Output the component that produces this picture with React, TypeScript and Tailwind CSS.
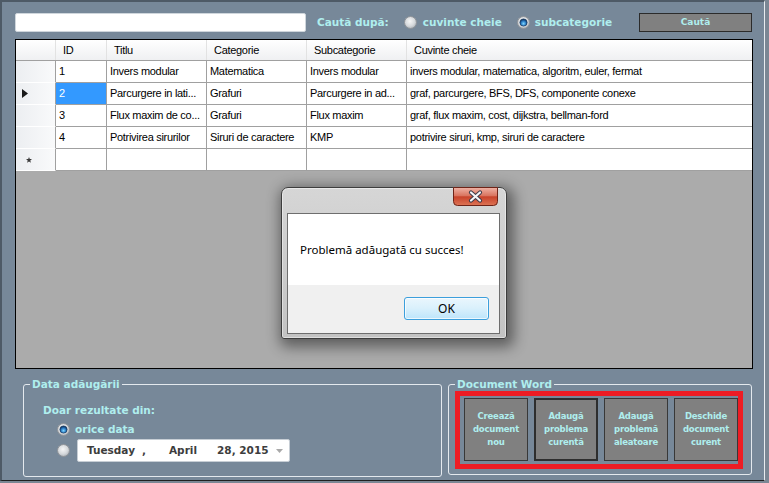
import React from "react";

const LBL = "font-['DejaVu_Sans',sans-serif] font-bold text-[#afeeee]";
const GRIDFONT = "font-['Liberation_Sans',Arial,sans-serif] text-[11px] tracking-[-0.3px] text-black";

function Radio({ checked, id }: { checked?: boolean; id: string }) {
  return (
    <svg width="13" height="13" viewBox="0 0 13 13" className="shrink-0 block">
      <defs>
        <radialGradient id={`g${id}`} cx="45%" cy="40%" r="65%">
          <stop offset="0" stopColor="#f6f6f6" />
          <stop offset="0.6" stopColor="#d6d9dc" />
          <stop offset="1" stopColor="#aab0b6" />
        </radialGradient>
        <radialGradient id={`b${id}`} cx="50%" cy="65%" r="60%">
          <stop offset="0" stopColor="#7fd6ff" />
          <stop offset="0.55" stopColor="#2a7cc4" />
          <stop offset="1" stopColor="#0c2f5c" />
        </radialGradient>
      </defs>
      <circle cx="6.5" cy="6.5" r="6" fill={`url(#g${id})`} stroke="#8f9398" />
      {checked && (
        <circle cx="6.5" cy="6.5" r="3.6" fill={`url(#b${id})`} stroke="#12365e" strokeWidth="0.7" />
      )}
    </svg>
  );
}

const colW = ["w-[51px]", "w-[100px]", "w-[100px]", "w-[100px]", "w-[345px]"];
const headers = ["ID", "Titlu", "Categorie", "Subcategorie", "Cuvinte cheie"];
const rows = [
  ["1", "Invers modular", "Matematica", "Invers modular", "invers modular, matematica, algoritm, euler, fermat"],
  ["2", "Parcurgere in lati...", "Grafuri", "Parcurgere in ad...", "graf, parcurgere, BFS, DFS, componente conexe"],
  ["3", "Flux maxim de co...", "Grafuri", "Flux maxim", "graf, flux maxim, cost, dijkstra, bellman-ford"],
  ["4", "Potrivirea sirurilor", "Siruri de caractere", "KMP", "potrivire siruri, kmp, siruri de caractere"],
];

function RowHeader({ children }: { children?: React.ReactNode }) {
  return (
    <div className="w-[40px] shrink-0 h-full flex items-center border-r border-r-[#a0a0a0] border-b border-b-white bg-linear-to-r from-[#eceef1] to-[#f9fafb]">
      {children}
    </div>
  );
}

function Grid() {
  return (
    <div className={`ml-[13px] mt-[7px] w-[738px] h-[330px] border border-black bg-[#ababab] ${GRIDFONT}`}>
      <div className="flex h-[21px] border-b border-[#a0a0a0] bg-linear-to-b from-white to-[#eff0f2]">
        <div className="w-[40px] shrink-0 border-r border-[#e2e2e2]" />
        {headers.map((h, i) => (
          <div
            key={h}
            className={`${colW[i]} shrink-0 flex items-center pl-[7px] ${i < 4 ? "border-r border-[#e2e2e2]" : ""}`}
          >
            {h}
          </div>
        ))}
      </div>
      {rows.map((r, ri) => (
        <div key={ri} className="flex h-[22px] bg-white">
          <RowHeader>
            {ri === 1 && (
              <svg width="6" height="9" viewBox="0 0 6 9" className="ml-[6px]">
                <path d="M0 0 L6 4.5 L0 9 Z" fill="#1a1a1a" />
              </svg>
            )}
          </RowHeader>
          {r.map((c, ci) => (
            <div
              key={ci}
              className={`${colW[ci]} shrink-0 flex items-center pl-[3px] whitespace-nowrap overflow-hidden border-b border-[#a0a0a0] ${
                ci < 4 ? "border-r" : ""
              } ${ri === 1 && ci === 0 ? "bg-[#3399ff] text-white" : ""}`}
            >
              {c}
            </div>
          ))}
        </div>
      ))}
      <div className="flex h-[22px] bg-white">
        <RowHeader>
          <svg width="6" height="6" viewBox="0 0 6 6" className="ml-[10px]">
            <path d="M3 0 L3.8 2 L6 2.1 L4.3 3.5 L4.9 5.8 L3 4.5 L1.1 5.8 L1.7 3.5 L0 2.1 L2.2 2 Z" fill="#3a3a3a" />
          </svg>
        </RowHeader>
        {colW.map((w, ci) => (
          <div key={ci} className={`${w} shrink-0 border-b border-[#a0a0a0] ${ci < 4 ? "border-r" : ""}`} />
        ))}
      </div>
    </div>
  );
}

function DocButton({ lines, focused }: { lines: string[]; focused?: boolean }) {
  return (
    <div
      className={`w-[64px] h-[63px] shrink-0 bg-[#808080] flex flex-col items-center justify-center text-center leading-[13px] text-[8.5px] tracking-[-0.2px] ${LBL} ${
        focused ? "border-2 border-[#2e2e2e]" : "border border-[#383838]"
      }`}
    >
      {lines.map((l) => (
        <span key={l}>{l}</span>
      ))}
    </div>
  );
}

function CloseButton() {
  return (
    <svg width="45" height="19" viewBox="0 0 45 19" className="absolute left-[171px] top-[-1px]">
      <defs>
        <linearGradient id="cb" x1="0" y1="0" x2="0" y2="1">
          <stop offset="0" stopColor="#efb3a6" />
          <stop offset="0.45" stopColor="#da7560" />
          <stop offset="0.52" stopColor="#c8432b" />
          <stop offset="1" stopColor="#dd7455" />
        </linearGradient>
      </defs>
      <path d="M0.5 0.5 H44.5 V14.5 Q44.5 18.5 40.5 18.5 H4.5 Q0.5 18.5 0.5 14.5 Z" fill="url(#cb)" stroke="#6e2418" />
      <path d="M18 5.5 L27 13.5 M27 5.5 L18 13.5" stroke="#3b3b4a" strokeWidth="4.2" strokeLinecap="round" />
      <path d="M18 5.5 L27 13.5 M27 5.5 L18 13.5" stroke="#f4f4f8" strokeWidth="2.2" strokeLinecap="round" />
    </svg>
  );
}

function Dialog() {
  return (
    <div className="absolute left-[281px] top-[187px] w-[226px] h-[152px] rounded-t-[7px] rounded-b-[3px] border border-[#3d3d3d] bg-linear-to-b from-[#d6d6d6] to-[#c3c3c3] shadow-[inset_0_0_0_1px_rgba(255,255,255,0.45),3px_4px_14px_4px_rgba(0,0,0,0.45)] pl-[5px] pr-[6px] pb-[4px] flex flex-col">
      <CloseButton />
      <div className="h-[25px] shrink-0" />
      <div className="flex-1 border border-[#6e6e6e] flex flex-col">
        <div className="h-[71px] shrink-0 bg-white pl-[12px] flex items-center font-['Noto_Sans',sans-serif] text-[11.5px] text-black">
          Problemă adăugată cu succes!
        </div>
        <div className="flex-1 bg-[#f0f0f0] flex justify-end items-start pt-[12px] pr-[10px]">
          <div className="w-[85px] h-[23px] rounded-[3px] border border-[#3c9fdc] shadow-[inset_0_0_0_1px_rgba(255,255,255,0.7)] bg-linear-to-b from-[#eaf6fd] via-[#d9f0fc] to-[#bde5fb] flex items-center justify-center font-['Noto_Sans',sans-serif] text-[12px] text-black">
            OK
          </div>
        </div>
      </div>
    </div>
  );
}

export default function App() {
  return (
    <div className="relative w-[769px] h-[483px] overflow-hidden bg-[#7b8794]">
      <div className="w-[765px] h-[481px] bg-[#778899] border-l-2 border-t-2 border-l-[#4e5a66] border-t-[#4e5a66] border-r border-r-[#e9edf0] border-b border-b-[#202020] flex flex-col">
        {/* top search row */}
        <div className="flex items-center mt-[11px] ml-[13px] h-[19px]">
          <div className="w-[291px] h-[19px] shrink-0 bg-white border border-[#cfd6dc] rounded-[2px]" />
          <span className={`${LBL} text-[10.5px] ml-[11px] whitespace-nowrap`}>Caută după:</span>
          <div className="ml-[15px]">
            <Radio id="r1" />
          </div>
          <span className={`${LBL} text-[10.5px] ml-[6px] whitespace-nowrap`}>cuvinte cheie</span>
          <div className="ml-[15px]">
            <Radio id="r2" checked />
          </div>
          <span className={`${LBL} text-[10.5px] ml-[5px] whitespace-nowrap`}>subcategorie</span>
          <div className={`ml-auto mr-[12px] w-[113px] h-[19px] bg-[#808080] border border-[#2b2b2b] flex items-center justify-center text-[9px] ${LBL}`}>
            Caută
          </div>
        </div>

        <Grid />

        {/* bottom groups */}
        <div className="flex items-start mt-[9px] ml-[21px]">
          <fieldset className="w-[419px] h-[99px] border border-[#e4e9ee] rounded-[3px]">
            <legend className={`${LBL} text-[10.5px] leading-[12px] ml-[6px] px-[2px]`}>Data adăugării</legend>
            <div className={`${LBL} text-[10.5px] leading-[13px] pt-[14px] ml-[19px]`}>Doar rezultate din:</div>
            <div className="flex items-center h-[13px] mt-[6px] ml-[33px]">
              <Radio id="r3" checked />
              <span className={`${LBL} text-[10.5px] ml-[5px]`}>orice data</span>
            </div>
            <div className="flex items-center h-[23px] mt-[3px] ml-[33px]">
              <Radio id="r4" />
              <div className="ml-[7px] w-[213px] h-[23px] bg-white border border-[#c7ced5] rounded-[2px] flex items-center font-['DejaVu_Sans',sans-serif] font-bold text-[10.5px] text-[#3d3d3d] whitespace-nowrap">
                <span className="ml-[9px]">Tuesday</span>
                <span className="ml-[7px]">,</span>
                <span className="ml-[23px]">April</span>
                <span className="ml-[20px]">28, 2015</span>
                <svg width="7" height="4" viewBox="0 0 7 4" className="ml-auto mr-[6px]">
                  <path d="M0 0 H7 L3.5 4 Z" fill="#a9a9a9" />
                </svg>
              </div>
            </div>
          </fieldset>

          <fieldset className="ml-[6px] w-[304px] h-[97px] border border-[#e4e9ee] rounded-[3px]">
            <legend className={`${LBL} text-[10.5px] leading-[12px] ml-[6px] px-[2px]`}>Document Word</legend>
            <div className="mt-[1px] ml-[6px] w-[288px] h-[78px] border-[5px] border-[#ed1c24] flex items-start gap-[6px] pl-[4px] pt-[2px]">
              <DocButton lines={["Creează", "document", "nou"]} />
              <DocButton lines={["Adaugă", "problema", "curentă"]} focused />
              <DocButton lines={["Adaugă", "problemă", "aleatoare"]} />
              <DocButton lines={["Deschide", "document", "curent"]} />
            </div>
          </fieldset>
        </div>
      </div>
      <Dialog />
    </div>
  );
}
